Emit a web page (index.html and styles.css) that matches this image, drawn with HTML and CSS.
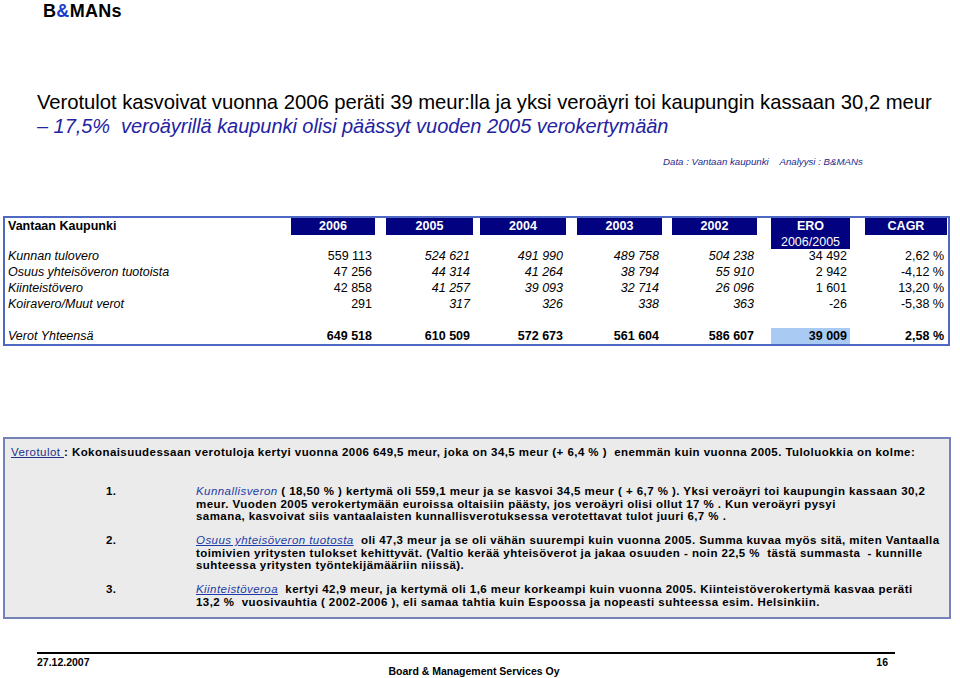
FILE: index.html
```html
<!DOCTYPE html>
<html lang="fi">
<head>
<meta charset="utf-8">
<title>Verotulot</title>
<link rel="stylesheet" href="styles.css">
</head>
<body>
<div class="logo">B<span class="amp">&amp;</span>MANs</div>

<h1 class="title">Verotulot kasvoivat vuonna 2006 peräti 39 meur:lla ja yksi veroäyri toi kaupungin kassaan 30,2 meur<br><span class="sub">– 17,5%&nbsp; veroäyrillä kaupunki olisi päässyt vuoden 2005 verokertymään</span></h1>

<p class="source">Data : Vantaan kaupunki <span class="analysis">Analyysi : B&amp;MANs</span></p>

<div class="table">
  <div class="head label">Vantaan Kaupunki</div>
  <div class="head"><span class="bar">2006</span></div>
  <div class="head"><span class="bar">2005</span></div>
  <div class="head"><span class="bar">2004</span></div>
  <div class="head"><span class="bar">2003</span></div>
  <div class="head"><span class="bar">2002</span></div>
  <div class="head"><span class="bar tall">ERO<span class="bar-sub">2006/2005</span></span></div>
  <div class="head"><span class="bar">CAGR</span></div>

  <div class="cell label it">Kunnan tulovero</div>
  <div class="cell">559 113</div><div class="cell it">524 621</div><div class="cell it">491 990</div><div class="cell it">489 758</div><div class="cell it">504 238</div><div class="cell">34 492</div><div class="cell">2,62 %</div>

  <div class="cell label it">Osuus yhteisöveron tuotoista</div>
  <div class="cell">47 256</div><div class="cell it">44 314</div><div class="cell it">41 264</div><div class="cell it">38 794</div><div class="cell it">55 910</div><div class="cell">2 942</div><div class="cell">-4,12 %</div>

  <div class="cell label it">Kiinteistövero</div>
  <div class="cell">42 858</div><div class="cell it">41 257</div><div class="cell it">39 093</div><div class="cell it">32 714</div><div class="cell it">26 096</div><div class="cell">1 601</div><div class="cell">13,20 %</div>

  <div class="cell label it">Koiravero/Muut verot</div>
  <div class="cell">291</div><div class="cell it">317</div><div class="cell it">326</div><div class="cell it">338</div><div class="cell it">363</div><div class="cell">-26</div><div class="cell">-5,38 %</div>

  <div class="spacer"></div>

  <div class="cell label it">Verot Yhteensä</div>
  <div class="cell b">649 518</div><div class="cell b">610 509</div><div class="cell b">572 673</div><div class="cell b">561 604</div><div class="cell b">586 607</div><div class="cell b"><span class="hl">39 009</span></div><div class="cell b">2,58 %</div>
</div>

<div class="notes">
  <p class="lead"><span class="u">Verotulot </span>: Kokonaisuudessaan verotuloja kertyi vuonna 2006 649,5 meur, joka on 34,5 meur (+ 6,4 % )&nbsp; enemmän kuin vuonna 2005. Tuloluokkia on kolme:</p>
  <ol class="items">
    <li class="item"><span class="num">1.</span><span class="txt"><em class="kw">Kunnallisveron</em> ( 18,50 % ) kertymä oli 559,1 meur ja se kasvoi 34,5 meur ( + 6,7 % ). Yksi veroäyri toi kaupungin kassaan 30,2<br>meur. Vuoden 2005 verokertymään euroissa oltaisiin päästy, jos veroäyri olisi ollut 17 % . Kun veroäyri pysyi<br>samana, kasvoivat siis vantaalaisten kunnallisverotuksessa verotettavat tulot juuri 6,7 % .</span></li>
    <li class="item"><span class="num">2.</span><span class="txt"><em class="kw ul">Osuus yhteisöveron tuotosta</em>&nbsp; oli 47,3 meur ja se oli vähän suurempi kuin vuonna 2005. Summa kuvaa myös sitä, miten Vantaalla<br>toimivien yritysten tulokset kehittyvät. (Valtio kerää yhteisöverot ja jakaa osuuden - noin 22,5 %&nbsp; tästä summasta&nbsp; - kunnille<br>suhteessa yritysten työntekijämääriin niissä).</span></li>
    <li class="item"><span class="num">3.</span><span class="txt"><em class="kw ul">Kiinteistöveroa</em>&nbsp; kertyi 42,9 meur, ja kertymä oli 1,6 meur korkeampi kuin vuonna 2005. Kiinteistöverokertymä kasvaa peräti<br>13,2 %&nbsp; vuosivauhtia ( 2002-2006 ), eli samaa tahtia kuin Espoossa ja nopeasti suhteessa esim. Helsinkiin.</span></li>
  </ol>
</div>

<footer class="footer">
  <span class="date">27.12.2007</span>
  <span class="company">Board &amp; Management Services Oy</span>
  <span class="page">16</span>
</footer>
</body>
</html>
```

FILE: styles.css
```css
* { box-sizing: border-box; }

html, body {
  margin: 0;
  padding: 0;
  background: #ffffff;
  color: #000000;
  font-family: "Liberation Sans", Arial, sans-serif;
}

body {
  width: 960px;
  height: 678px;
  overflow: hidden;
}

.logo {
  padding-left: 43px;
  height: 22px;
  font-size: 18px;
  line-height: 22px;
  font-weight: bold;
  letter-spacing: 0.3px;
}

.amp { color: #1a3cc8; }

.title {
  margin: 68px 0 0 37px;
  font-size: 20.3px;
  line-height: 24px;
  font-weight: normal;
  white-space: nowrap;
  letter-spacing: -0.05px;
}

.sub {
  color: #2323a3;
  font-style: italic;
  font-size: 20px;
}

.source {
  margin: 18px 0 0 663px;
  font-size: 9.7px;
  line-height: 12px;
  color: #1c2a8c;
  font-style: italic;
  white-space: nowrap;
}

.analysis { margin-left: 8px; }

.table {
  margin: 48px 0 0 3px;
  width: 947px;
  border: 2px solid #4f68c4;
  display: grid;
  grid-template-columns: 286px 84px 98px 93px 96px 95px 93px 97px;
  grid-template-rows: 30px repeat(4, 16px) 16px 16px;
  font-size: 12.5px;
}

.head {
  display: flex;
  justify-content: flex-end;
  align-items: flex-start;
}

.head.label {
  justify-content: flex-start;
  padding-left: 3px;
  font-weight: bold;
  line-height: 17px;
}

.bar {
  display: flex;
  flex-direction: column;
  align-items: center;
  height: 17px;
  background: #020280;
  color: #ffffff;
  font-weight: bold;
  line-height: 17px;
  width: 85px;
}

.head:nth-child(2) .bar { width: 84px; }
.head:nth-child(3) .bar { width: 87px; }
.head:nth-child(4) .bar { width: 86px; }
.head:nth-child(7) .bar { width: 79px; }
.head:nth-child(8) .bar { width: 82px; }

.bar.tall { height: 31px; }

.bar-sub {
  font-weight: normal;
  line-height: 14px;
}

.cell {
  line-height: 16px;
  text-align: right;
  padding-right: 3px;
  white-space: nowrap;
}

.cell.label {
  text-align: left;
  padding-left: 3px;
}

.it { font-style: italic; }
.b { font-weight: bold; }

.spacer { grid-column: 1 / -1; }

.hl {
  display: block;
  background: #a9cbf3;
  margin-left: 14px;
  margin-right: -3px;
  padding-right: 3px;
}

.notes {
  margin: 91px 0 0 3px;
  width: 948px;
  border: 2px solid #7583b8;
  background: #ebebeb;
  padding: 7px 6px 9px 6px;
  font-size: 11.5px;
  font-weight: bold;
  letter-spacing: 0.44px;
  white-space: nowrap;
}

.lead {
  margin: 0;
  line-height: 13px;
}

.u {
  font-weight: normal;
  color: #22308a;
  text-decoration: underline;
}

.items {
  list-style: none;
  margin: 26px 0 0 0;
  padding: 0 0 0 95px;
  display: flex;
  flex-direction: column;
  gap: 11.5px;
}

.item {
  display: grid;
  grid-template-columns: 90px 1fr;
  line-height: 12.5px;
}

.kw {
  font-weight: normal;
  color: #1d3aa6;
}

.ul { text-decoration: underline; }

.footer {
  margin: 33px 0 0 37px;
  width: 858px;
  border-top: 2px solid #000000;
  display: grid;
  grid-template-columns: 1fr auto 1fr;
  align-items: start;
  font-weight: bold;
  font-size: 10.5px;
  padding-top: 2px;
}

.date, .page { line-height: 13px; }

.company {
  margin-top: 9px;
  line-height: 13px;
  padding-left: 16px;
}

.page {
  justify-self: end;
  padding-right: 7px;
}
```
